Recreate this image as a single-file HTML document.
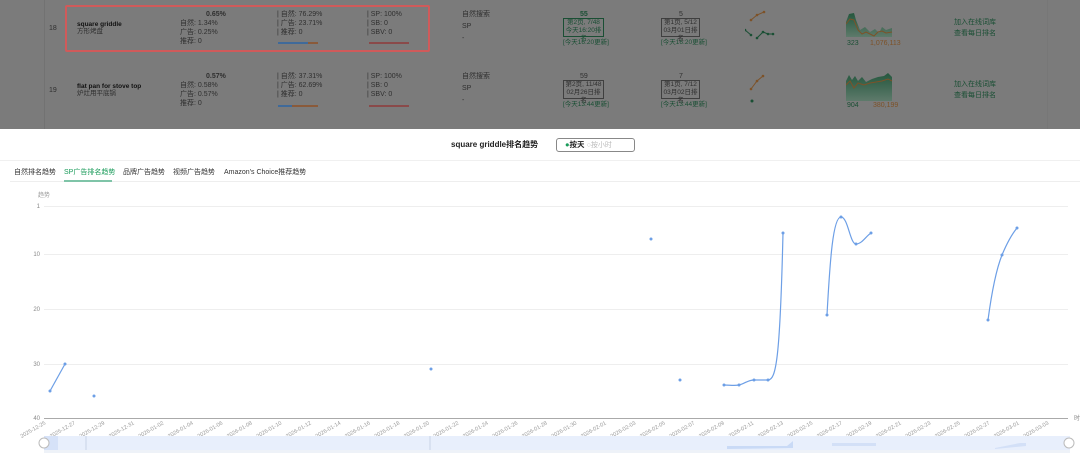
<!DOCTYPE html>
<html><head><meta charset="utf-8"><style>
*{margin:0;padding:0;box-sizing:border-box}
body{width:1080px;height:461px;overflow:hidden;background:#fff;font-family:"Liberation Sans","Noto Sans CJK SC",sans-serif;position:relative}
.ov{position:absolute;left:0;top:0;width:1080px;height:129px;background:#7b7b7b;overflow:hidden}
.t{position:absolute;font-size:7px;color:#2f2f2f;white-space:nowrap;line-height:9px}
.g{color:#1a4f34}
.o{color:#7d5228}
.b{position:absolute;border:1px solid #3f3f3f;font-size:6.5px;line-height:8px;text-align:center;color:#2f2f2f}
</style></head><body>
<div class="ov">
  <div style="position:absolute;left:44px;top:0;width:1px;height:129px;background:#727272"></div>
  <div style="position:absolute;left:1047px;top:0;width:1px;height:129px;background:#777"></div>
  <div style="position:absolute;left:65px;top:5px;width:365px;height:47px;border:2px solid #d05a5a;border-radius:2px"></div>
  <div class="t" style="left:49px;top:24px">18</div>
  <div class="t" style="left:77px;top:20px;font-weight:bold;color:#111;font-size:6.5px">square griddle</div>
  <div class="t" style="left:77px;top:27px;font-size:6.5px">方形烤盘</div>
  <div class="t" style="left:206px;top:10px;font-weight:bold">0.65%</div>
  <div class="t" style="left:180px;top:19px">自然: 1.34%</div>
  <div class="t" style="left:180px;top:28px">广告: 0.25%</div>
  <div class="t" style="left:180px;top:37px">推荐: 0</div>
  <div class="t" style="left:277px;top:10px">| 自然: 76.29%</div>
  <div class="t" style="left:277px;top:19px">| 广告: 23.71%</div>
  <div class="t" style="left:277px;top:28px">| 推荐: 0</div>
  <div style="position:absolute;left:278px;top:42px;width:30px;height:2px;background:#3f6a9a"></div>
  <div style="position:absolute;left:308px;top:42px;width:10px;height:2px;background:#8a5a3a"></div>
  <div class="t" style="left:367px;top:10px">| SP: 100%</div>
  <div class="t" style="left:367px;top:19px">| SB: 0</div>
  <div class="t" style="left:367px;top:28px">| SBV: 0</div>
  <div style="position:absolute;left:369px;top:42px;width:40px;height:2px;background:#8a4a4a"></div>
  <div class="t" style="left:462px;top:10px">自然搜索</div>
  <div class="t" style="left:462px;top:22px">SP</div>
  <div class="t" style="left:462px;top:34px">-</div>
  <div class="t g" style="left:580px;top:10px;font-weight:bold">55</div>
  <div class="b g" style="left:563px;top:18px;width:41px;height:19px;border-color:#1a4f34;color:#1a4f34">第2页, 7/48<br>今天16:20排名</div>
  <div class="t g" style="left:563px;top:38px;font-size:6.5px">[今天16:20更新]</div>
  <div class="t" style="left:679px;top:10px">5</div>
  <div class="b" style="left:661px;top:18px;width:39px;height:19px">第1页, 5/12<br>03月01日排名</div>
  <div class="t g" style="left:661px;top:38px;font-size:6.5px">[今天16:20更新]</div>
  <svg style="position:absolute;left:745px;top:8px" width="50" height="35"><polyline points="6,12 12,7 19,4" fill="none" stroke="#7d5228" stroke-width="1"/><polyline points="0,22 6,27" fill="none" stroke="#1a4f34"/><polyline points="12,30 18,24 23,26 28,26" fill="none" stroke="#1a4f34"/><g fill="#7d5228"><circle cx="6" cy="12" r="1.3"/><circle cx="12" cy="7" r="1.3"/><circle cx="19" cy="4" r="1.3"/></g><g fill="#1a4f34"><circle cx="0" cy="22" r="1.3"/><circle cx="6" cy="27" r="1.3"/><circle cx="12" cy="30" r="1.3"/><circle cx="18" cy="24" r="1.3"/><circle cx="23" cy="26" r="1.3"/><circle cx="28" cy="26" r="1.3"/></g></svg>
  <svg style="position:absolute;left:846px;top:12px" width="50" height="25"><defs><linearGradient id="gg" x1="0" y1="0" x2="0" y2="1"><stop offset="0" stop-color="#24573d"/><stop offset="1" stop-color="#5e7a6b"/></linearGradient></defs><path d="M0,10 L3,2 L8,1 L10,8 L14,18 L19,15 L24,20 L29,17 L33,21 L36,15 L40,18 L46,16 L46,25 L0,25Z" fill="url(#gg)"/><polyline points="0,12 4,7 8,8 12,18 16,22 20,20 24,22 28,24 32,20 36,19 40,21 46,20" fill="none" stroke="#7d5228"/></svg>
  <div class="t g" style="left:847px;top:39px">323</div>
  <div class="t o" style="left:870px;top:39px">1,076,113</div>
  <div class="t g" style="left:954px;top:18px">加入在线词库</div>
  <div class="t g" style="left:954px;top:29px">查看每日排名</div>
  <div class="t" style="left:49px;top:86px">19</div>
  <div class="t" style="left:77px;top:82px;font-weight:bold;color:#111;font-size:6.5px">flat pan for stove top</div>
  <div class="t" style="left:77px;top:89px;font-size:6.5px">炉灶用平底锅</div>
  <div class="t" style="left:206px;top:72px;font-weight:bold">0.57%</div>
  <div class="t" style="left:180px;top:81px">自然: 0.58%</div>
  <div class="t" style="left:180px;top:90px">广告: 0.57%</div>
  <div class="t" style="left:180px;top:99px">推荐: 0</div>
  <div class="t" style="left:277px;top:72px">| 自然: 37.31%</div>
  <div class="t" style="left:277px;top:81px">| 广告: 62.69%</div>
  <div class="t" style="left:277px;top:90px">| 推荐: 0</div>
  <div style="position:absolute;left:278px;top:105px;width:14px;height:2px;background:#3f6a9a"></div>
  <div style="position:absolute;left:292px;top:105px;width:26px;height:2px;background:#8a5a3a"></div>
  <div class="t" style="left:367px;top:72px">| SP: 100%</div>
  <div class="t" style="left:367px;top:81px">| SB: 0</div>
  <div class="t" style="left:367px;top:90px">| SBV: 0</div>
  <div style="position:absolute;left:369px;top:105px;width:40px;height:2px;background:#8a4a4a"></div>
  <div class="t" style="left:462px;top:72px">自然搜索</div>
  <div class="t" style="left:462px;top:84px">SP</div>
  <div class="t" style="left:462px;top:96px">-</div>
  <div class="t" style="left:580px;top:72px">59</div>
  <div class="b" style="left:563px;top:80px;width:41px;height:19px">第2页, 11/48<br>02月26日排名</div>
  <div class="t g" style="left:563px;top:100px;font-size:6.5px">[今天13:44更新]</div>
  <div class="t" style="left:679px;top:72px">7</div>
  <div class="b" style="left:661px;top:80px;width:39px;height:19px">第1页, 7/12<br>03月02日排名</div>
  <div class="t g" style="left:661px;top:100px;font-size:6.5px">[今天13:44更新]</div>
  <svg style="position:absolute;left:745px;top:70px" width="50" height="35"><polyline points="6,19 12,11 18,6" fill="none" stroke="#7d5228"/><g fill="#7d5228"><circle cx="6" cy="19" r="1.3"/><circle cx="12" cy="11" r="1.3"/><circle cx="18" cy="6" r="1.3"/></g><circle cx="7" cy="31" r="1.5" fill="#1a4f34"/></svg>
  <svg style="position:absolute;left:846px;top:71px" width="50" height="30"><path d="M0,10 L3,4 L6,9 L9,5 L12,10 L16,6 L20,11 L26,8 L32,6 L38,5 L42,2 L46,6 L46,30 L0,30Z" fill="url(#gg)"/><polyline points="0,14 4,10 8,17 12,12 18,14 24,12 30,11 36,10 42,8 46,10" fill="none" stroke="#7d5228"/></svg>
  <div class="t g" style="left:847px;top:101px">904</div>
  <div class="t o" style="left:873px;top:101px">380,199</div>
  <div class="t g" style="left:954px;top:80px">加入在线词库</div>
  <div class="t g" style="left:954px;top:91px">查看每日排名</div>
</div>
<div style="position:absolute;left:0;top:129px;width:1080px;height:32px;background:#fff;border-bottom:1px solid #f0f0f0"></div>
<div style="position:absolute;left:451px;top:139px;font-size:8px;font-weight:bold;color:#222">square griddle排名趋势</div>
<div style="position:absolute;left:556px;top:138px;width:79px;height:14px;border:1px solid #888;border-radius:3px;font-size:7.5px;line-height:12px;padding-left:8px"><span style="color:#1a9b5a">●</span><b style="color:#222">按天</b> <span style="color:#bbb;font-size:7px">○按小时</span></div>
<div style="position:absolute;left:0;top:167px;font-size:7px;color:#333;white-space:nowrap">
 <span style="position:absolute;left:14px">自然排名趋势</span>
 <span style="position:absolute;left:64px;color:#1a9b5a">SP广告排名趋势</span>
 <span style="position:absolute;left:123px">品牌广告趋势</span>
 <span style="position:absolute;left:173px">视频广告趋势</span>
 <span style="position:absolute;left:224px">Amazon's Choice推荐趋势</span>
</div>
<div style="position:absolute;left:10px;top:181px;width:1070px;height:1px;background:#eee"></div>
<div style="position:absolute;left:64px;top:180px;width:48px;height:2px;background:#7fc4a8"></div>
<svg style="position:absolute;left:0;top:0" width="1080" height="461">
 <text x="38" y="197" font-size="6" fill="#999" font-family="Liberation Sans,Noto Sans CJK SC,sans-serif">趋势</text>
 <g stroke="#eee" stroke-width="1">
  <line x1="44" y1="206.5" x2="1068" y2="206.5"/><line x1="44" y1="254.5" x2="1068" y2="254.5"/><line x1="44" y1="309.5" x2="1068" y2="309.5"/><line x1="44" y1="364.5" x2="1068" y2="364.5"/>
 </g>
 <line x1="44" y1="418.5" x2="1068" y2="418.5" stroke="#aaa"/>
 <g font-size="6" fill="#888" text-anchor="end" font-family="Liberation Sans,sans-serif">
  <text x="40" y="208">1</text><text x="40" y="256">10</text><text x="40" y="311">20</text><text x="40" y="366">30</text><text x="40" y="420">40</text>
  <text x="1080" y="420" text-anchor="end">时</text>
 </g>
 <g id="xl" font-size="5.5" fill="#999" text-anchor="end" font-family="Liberation Sans,sans-serif"></g>
 <g fill="none" stroke="#6d9fe6" stroke-width="1.2">
  <path d="M50,391 L65,364"/>
  <path d="M724,385 C730,385 734,386 739,385 C744,384 748,380 754,380 L768,380 C776,380 780,360 783,233"/>
  <path d="M827,315 C830,260 833,217 841,217 C848,217 850,244 856,244 C862,244 866,236 871,233"/>
  <path d="M988,320 C992,290 996,270 1002,255 C1007,243 1012,234 1017,228"/>
 </g>
 <g fill="#6d9fe6">
  <circle cx="50" cy="391" r="1.5"/><circle cx="65" cy="364" r="1.5"/><circle cx="94" cy="396" r="1.5"/><circle cx="431" cy="369" r="1.5"/><circle cx="651" cy="239" r="1.5"/><circle cx="680" cy="380" r="1.5"/>
  <circle cx="724" cy="385" r="1.5"/><circle cx="739" cy="385" r="1.5"/><circle cx="754" cy="380" r="1.5"/><circle cx="768" cy="380" r="1.5"/><circle cx="783" cy="233" r="1.5"/>
  <circle cx="827" cy="315" r="1.5"/><circle cx="841" cy="217" r="1.5"/><circle cx="856" cy="244" r="1.5"/><circle cx="871" cy="233" r="1.5"/>
  <circle cx="988" cy="320" r="1.5"/><circle cx="1002" cy="255" r="1.5"/><circle cx="1017" cy="228" r="1.5"/>
 </g>
 <rect x="44" y="436" width="1026" height="14" fill="#e8effc"/>
 <rect x="44" y="450" width="1026" height="3" fill="#eef2f8"/>
 <path d="M727,446 L787,446 L793,441 L793,448 L727,449Z" fill="#c9daf6"/>
 <path d="M832,443 L876,443 L876,446 L832,446Z" fill="#d3e0f7"/>
 <path d="M995,448 L1020,443 L1026,443 L1026,446 L995,449Z" fill="#d3e0f7"/>
 <line x1="86" y1="436" x2="86" y2="450" stroke="#c8d3e6"/>
 <line x1="430" y1="436" x2="430" y2="450" stroke="#c8d3e6"/>
 <rect x="44" y="436" width="14" height="14" fill="#d6e2f8"/>
 <circle cx="44" cy="443" r="5" fill="#fff" stroke="#bbb"/>
 <circle cx="1069" cy="443" r="5" fill="#fff" stroke="#bbb"/>
</svg>
<script>
var g=document.getElementById('xl'),d=new Date(2025,11,25);
for(var k=0;k<35;k++){var x=46+k*2*14.75;var dt=new Date(d.getTime()+k*2*864e5);
var s=dt.getFullYear()+'-'+('0'+(dt.getMonth()+1)).slice(-2)+'-'+('0'+dt.getDate()).slice(-2);
var t=document.createElementNS('http://www.w3.org/2000/svg','text');t.setAttribute('x',x);t.setAttribute('y',424);
t.setAttribute('transform','rotate(-30 '+x+' 424)');t.textContent=s;g.appendChild(t);}
</script>
</body></html>
